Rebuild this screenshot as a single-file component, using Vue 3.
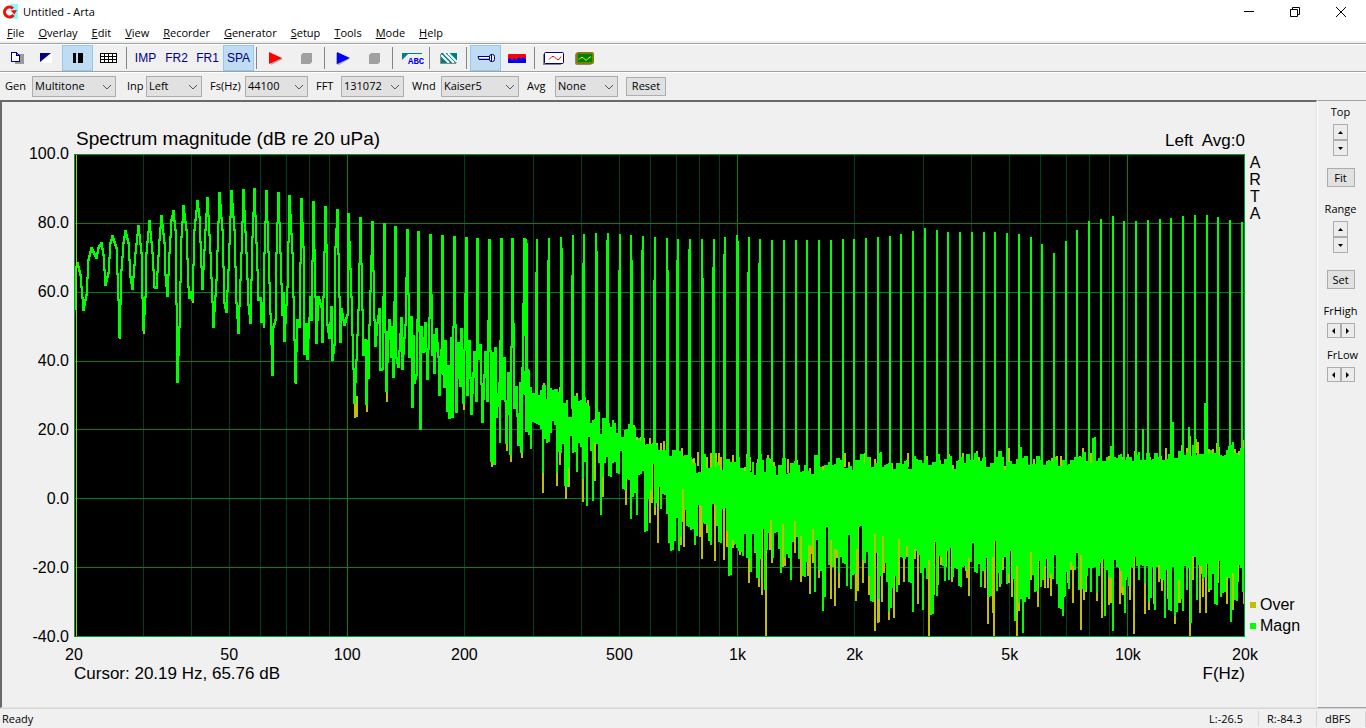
<script setup>
const menus = ['File', 'Overlay', 'Edit', 'View', 'Recorder', 'Generator', 'Setup', 'Tools', 'Mode', 'Help']

const fields = [
  { id: 'gen', label: 'Gen', value: 'Multitone' },
  { id: 'inp', label: 'Inp', value: 'Left' },
  { id: 'fs', label: 'Fs(Hz)', value: '44100' },
  { id: 'fft', label: 'FFT', value: '131072' },
  { id: 'wnd', label: 'Wnd', value: 'Kaiser5' },
  { id: 'avg', label: 'Avg', value: 'None' }
]

/* ---- axes ---- */
const W = 1170
const H = 482
const xOf = f => Math.round((W * Math.log10(f / 20)) / 3)
const yOf = db => Math.round(((100 - db) * H) / 140)

const minorX = []
for (const base of [10, 100, 1000, 10000]) {
  for (let n = 2; n <= 9; n++) {
    const f = base * n
    if (f > 20 && f < 20000) minorX.push(xOf(f))
  }
}
const majorX = [100, 1000, 10000].map(xOf)
const dbLevels = [100, 80, 60, 40, 20, 0, -20, -40]
const majorY = dbLevels.slice(1, -1).map(yOf)
const freqTicks = [
  [20, '20'], [50, '50'], [100, '100'], [200, '200'], [500, '500'],
  [1000, '1k'], [2000, '2k'], [5000, '5k'], [10000, '10k'], [20000, '20k']
]
const pctX = f => (xOf(f) / W) * 100 + '%'
const pctY = db => (yOf(db) / H) * 100 + '%'

/* ---- low frequency trace: x,y vertices ---- */
const lowPoints = (
  '1,155 3,113 4,109 7,121 10,156 13,141 15,106 18,94 23,104 25,94 28,89 30,101 32,131 35,119 37,89 39,82 43,94 45,146 46,183 ' +
  '48,116 50,89 52,77 55,89 57,123 59,135 62,99 65,72 68,99 69,144 70,176 72,143 73,99 76,67 79,99 81,133 83,134 86,86 88,62 91,89 92,121 94,142 ' +
  '96,99 98,66 100,57 102,76 103,150 104,228 106,173 108,83 110,52 113,76 115,133 116,144 118,138 119,146 121,76 124,47 126,63 128,113 129,135 ' +
  '132,76 134,44 137,99 140,173 143,126 146,39 149,76 151,149 153,158 155,116 158,37 161,76 163,149 165,179 168,99 170,36 173,99 175,151 177,169 ' +
  '179,83 181,35 184,116 185,146 187,144 188,168 190,149 190,173 191,99 193,37 196,129 199,221 200,173 202,166 203,99 205,39 207,99 209,161 210,139 211,187 ' +
  '214,133 216,42 219,99 220,143 222,228 224,166 226,173 228,45 230,93 231,200 233,170 234,205 237,143 238,166 240,48 242,143 243,189 245,143 248,153 249,188 ' +
  '250,143 252,53 253,91 254,171 256,184 258,153 259,206 261,191 262,93 264,56 266,143 267,188 268,155 271,171 274,161 275,60 278,143 279,181 281,249 283,206 285,156 287,64 ' +
  '289,156 290,201 292,186 293,250 295,187 295,224 296,171 299,68 301,166 302,192 304,169 306,155 307,216 309,215 311,70 312,178 313,237 315,178 316,166 ' +
  '318,203 319,173 320,223 322,73 323,204 325,213 328,164 329,215 331,184 332,171 334,76 336,203 338,163 339,253 340,182 341,229 343,221 344,166 345,78 347,275 ' +
  '348,173 350,198 352,169 354,225 356,164 357,81 359,201 360,181 361,219 363,175 365,203 366,241 368,196 369,82 370,220 371,233 372,187 374,257 375,212 376,264 378,184 379,263 ' +
  '381,83 383,258 385,189 387,232 388,175 390,249 391,196 393,84 394,241 396,187 398,260 401,198 403,247 404,85 405,205 407,191 409,268 412,198 414,247 416,86 ' +
  '418,307 420,199 421,310 422,194 423,263 426,229 426,288 428,85 429,245 431,204 433,289 435,219 437,300 439,85 441,254 443,233 445,291 447,229 448,298 449,214 451,85 453,277 454,216 456,280'
).split(' ').map(p => p.split(',').map(Number))

/* upper and lower extent of the trace in every plot column */
const columns = new Map()
const extend = (x, y0, y1) => {
  const c = columns.get(x)
  if (c) {
    c[0] = Math.min(c[0], y0)
    c[1] = Math.max(c[1], y1)
  } else columns.set(x, [y0, y1])
}
for (let i = 1; i < lowPoints.length; i++) {
  const [xa, ya] = lowPoints[i - 1]
  const [xb, yb] = lowPoints[i]
  const n = Math.max(1, xb - xa)
  for (let s = 0; s < n; s++) {
    const a = Math.round(ya + ((yb - ya) * s) / n)
    const b = Math.round(ya + ((yb - ya) * (s + 1)) / n)
    extend(xa + s, Math.min(a, b), Math.max(a, b))
  }
}
const lowTrace = [...columns].map(([x, [a, b]]) => `M${x} ${a - 1}V${b + 1}`).join('')

const lowOver = [[46, 184], [70, 179], [104, 228], [119, 148], [222, 229], [281, 263], [283, 262], [293, 257], [313, 247], [376, 264], [390, 255], [418, 312], [433, 296], [437, 307], [448, 303]]

/* ---- dense region: level samples given in thirds of a plot unit ---- */
const decode = (text, ox, oy) =>
  text.trim().split(/\s+/).map(p => {
    const [x, y] = p.split(',').map(Number)
    return [x / 3 + ox, y / 3 + oy]
  })

const bandA = [446, 66]
const bandB = [676, 266]
const bandC = [926, 226]

const tops = [
  ...decode('0,490 8,445 20,450 35,500 42,520 55,515 60,500 72,490 80,530 92,500 105,508 122,515 130,540 142,530 150,585 157,530 170,525 178,540 192,530 205,550 212,600 225,590 237,570 245,640 250,590 265,610 275,620 280,600 290,630 297,640 305,645 313,625 330,610 342,620 350,660 362,655 380,665 400,665 410,672 420,690 432,690 440,695 450,700 465,685 480,690 495,705 510,710 520,720 540,750 550,700 565,740 580,740 595,725 610,740 620,710 640,722 655,710 670,745 680,705 688,752 692,760', ...bandA),
  ...decode('3,150 8,120 15,160 24,125 33,98 37,120 45,155 54,115 62,120 72,130 82,160 90,130 103,112 115,160 125,130 136,122 148,125 156,147 164,130 178,150 187,158 197,105 206,135 216,140 228,125 240,120 252,130 266,110 275,120 286,145 300,130 308,140 320,113 336,100 345,130 355,112 364,140 375,120 390,90 398,135 408,130 418,125 432,147 442,130 458,122 470,115 480,140 490,105 502,115 510,120 520,130 528,110 540,125 552,120 562,100 575,130 585,118 598,108 612,137 625,115 636,105 645,125 655,100 668,120 680,98 690,115 700,105 714,136 728,125 740,110 750,93 758,110 768,140', ...bandB),
  ...decode('20,240 30,237 38,245 52,235 62,198 70,235 78,228 84,255 92,230 102,243 115,222 122,235 134,252 145,240 158,243 170,232 180,250 190,235 205,248 215,237 228,230 240,232 254,208 265,235 275,243 282,168 288,240 298,232 315,243 325,230 334,190 340,225 350,228 360,218 372,238 388,232 400,243 408,215 417,207 424,235 429,140 435,235 445,215 455,238 470,218 480,230 495,230 508,215 516,222 521,123 528,230 540,212 550,225 561,207 567,132 573,220 580,190 590,220 600,218 608,218 613,68 618,218 640,210 650,205 662,218 672,222 680,208 692,195 700,187 708,220 718,215 725,195 731,195', ...bandC)
]

const floors = [
  ...decode('0,670 5,700 12,525 20,630 27,600 35,700 42,615 55,620 62,630 69,765 75,660 82,670 92,640 100,615 110,770 118,705 128,680 138,805 146,750 152,650 162,700 168,755 178,680 188,790 195,735 200,863 205,660 212,700 218,845 228,675 234,730 240,887 250,770 256,740 263,710 270,780 280,735 293,765 302,700 315,810 325,780 335,908 342,830 350,893 360,770 368,760 378,940 385,840 392,810 400,735 408,860 415,800 425,880 432,830 440,890 447,975 455,995 463,965 470,895 475,995 480,950 487,820 495,870 505,930 515,935 523,980 532,950 540,860 548,910 560,915 573,975 582,865 590,925 603,975 612,870 622,935 630,1068 637,960 648,985 658,1005 668,1013 675,950 685,1020', ...bandA),
  ...decode('0,350 5,462 10,345 16,395 24,477 30,430 38,327 44,522 50,400 60,345 65,310 70,420 78,343 86,390 93,459 98,315 106,415 116,413 123,492 130,375 137,310 142,360 147,422 154,350 162,473 172,425 181,378 188,340 195,516 203,372 210,460 216,582 222,537 229,325 237,442 243,362 249,440 260,390 267,470 274,410 282,440 290,503 297,355 303,513 310,468 320,390 331,320 338,420 344,442 350,395 358,480 366,553 376,350 382,405 386,540 394,475 401,350 406,430 413,490 420,576 428,503 433,480 440,524 446,362 454,420 462,420 470,385 480,490 488,578 496,386 504,405 510,470 516,579 524,450 532,486 538,425 546,588 552,370 560,527 569,410 577,450 585,483 590,405 597,489 603,390 610,480 618,450 630,503 640,440 650,450 658,425 669,380 678,465 686,440 693,507 702,455 708,572 713,418 720,530 728,410 733,375 738,513 745,470 752,500 760,420 770,498 776,465', ...bandB),
  ...decode('30,585 34,520 40,600 45,722 52,560 60,668 68,759 75,677 82,660 93,525 100,590 108,640 114,545 120,620 128,603 135,558 142,548 150,595 157,605 163,530 170,620 180,690 188,713 193,650 198,575 206,630 214,545 222,570 228,530 234,638 241,532 248,635 254,640 262,590 268,570 275,640 282,565 290,640 297,600 307,548 315,717 322,575 330,600 338,755 346,545 354,565 361,575 366,620 372,711 380,590 388,630 395,570 404,540 412,563 418,602 427,560 435,610 442,560 450,665 456,560 462,702 470,570 476,560 487,605 497,716 503,575 510,692 517,565 528,707 535,600 542,668 549,702 556,565 561,638 567,570 573,731 580,535 591,660 600,558 606,610 614,590 622,565 630,635 640,590 648,678 655,550 663,655 672,640 680,590 686,605 693,725 700,590 708,668 715,565 722,570 728,640 734,660', ...bandC)
]

const overLow = [
  ...decode('69,818 111,797 120,735 138,838 146,800 189,845 224,783 249,830 318,855 389,910 397,850 414,968 487,905 492,980 546,1016 540,950 586,1022 612,1020 620,980 642,975 660,1005 687,1090 705,998', ...bandA),
  ...decode('17,370 36,525 48,648 60,390 66,430 98,440 105,430 136,400 153,486 175,468 180,521 190,430 208,474 243,537 255,557 267,505 318,542 324,512 339,489 357,525 375,632 383,608 387,605 396,546 402,460 432,594 447,495 462,486 470,410 495,418 504,551 537,648 541,500 553,525 565,495 606,486 588,440 657,527 647,452 706,505 714,611 728,580 732,648 750,500', ...bandB),
  ...decode('9,570 36,650 28,610 51,768 87,657 94,600 114,681 135,625 143,624 152,647 192,650 205,610 219,668 243,749 252,660 258,635 306,713 327,675 333,668 360,671 367,640 378,600 390,660 402,762 435,702 462,671 477,605 485,632 503,658 535,668 541,668 570,768 580,600 600,699 609,650 618,699 627,635 655,610 681,671 699,689 714,605 731,671', ...bandC)
]

const overHigh = [
  ...decode('72,488 95,515 120,500 170,520 203,540 265,610 343,615 352,652 372,655 390,655 412,668 422,668 432,662 486,685 500,718 523,715 534,695 562,710 573,700 588,700 596,698 603,710 640,705 680,702 715,718', ...bandA),
  ...decode('0,110 28,120 53,105 73,125 113,118 142,120 180,145 285,100 345,100 360,110 427,130 475,100 570,120 598,102 638,100 680,93 777,85', ...bandB),
  ...decode('27,207 102,238 155,233 183,228 240,228 272,220 368,230 385,222 451,230 497,205 545,195 587,178 593,185 628,208 650,188 656,200 705,208 727,155 730,180', ...bandC)
]

const nearest = (list, x) => {
  let best = list[0]
  for (const p of list) if (Math.abs(p[0] - x) < Math.abs(best[0] - x)) best = p
  return best[1]
}

let denseOver = ''
let denseMagn = ''
for (let x = 447; x < W; x += 2) {
  const n = (x * 7919) % 13
  const top = Math.round(nearest(tops, x)) + (n % 4)
  const bottom = Math.round(nearest(floors, x)) - (n % 5)
  denseMagn += `M${x} ${top}V${bottom}`
  if (x > 560) denseOver += `M${x} ${top - (n === 3 ? 4 : 0)}V${bottom + (n === 5 ? 8 : 0)}`
}
for (const [x, y] of overLow) {
  denseOver += `M${Math.round(x)} ${Math.round(nearest(tops, x)) + 12}V${Math.min(H, Math.round(y))}`
}
for (const [x, y] of overHigh) denseOver += `M${Math.round(x)} ${Math.round(y)}v14`
for (const [x, y] of lowOver) denseOver += `M${x} ${y - 20}V${y + 1}`

/* ---- multitone lines, ten per octave around 1 kHz ---- */
const toneTops = [
  85, 85, 84, 83, 81, 80, 79, 79, 80, 81, 82, 83, 84, 85, 85, 85, 85, 83, 81, 83,
  85, 86, 86, 86, 86, 86, 86, 85, 85, 84, 83, 82, 80, 77, 74, 76, 78, 78, 78, 78,
  78, 79, 80, 83, 90, 99, 87, 76, 67, 65, 62, 67, 67, 66, 65, 64, 62, 61, 61, 63, 66, 68
]
const tones = toneTops
  .map((y, i) => {
    const x = Math.round(663 + (i - 18) * 11.74)
    const base = Math.round(nearest(tops, x)) + 12
    const skirt = i < 21 ? `M${x + (i % 3 === 0 ? 1 : -1)} ${y + 4 + ((i * 29) % 40)}V${base}` : ''
    return `M${x} ${y}V${base}${skirt}`
  })
  .join('')
</script>

<template>
  <div class="window">
    <header class="titlebar">
      <svg class="logo" width="16" height="16" viewBox="0 0 16 16">
        <path d="M8 0h8v15H8z" fill="#8ff" />
        <circle cx="7.500" cy="8" r="4" fill="#fff" />
        <path d="M11 4.500A5 5 0 1 0 11.500 11" fill="none" stroke="#f01010" stroke-width="3" />
        <path d="M8.500 6.500L15 6l-2.500 4.500z" fill="#f01010" />
      </svg>
      <h1>Untitled - Arta</h1>
      <div class="caption-buttons">
        <button aria-label="Minimize"><svg width="12" height="12"><path d="M1 5.500h10" stroke="#000" /></svg></button>
        <button aria-label="Restore"><svg width="12" height="12"><path d="M1.500 3.500h7v7h-7zM3.500 3V1.500h7v7H9" fill="none" stroke="#000" /></svg></button>
        <button aria-label="Close"><svg width="12" height="12"><path d="M1 1l10 10M11 1L1 11" stroke="#000" /></svg></button>
      </div>
    </header>

    <nav class="menubar">
      <button v-for="m in menus" :key="m"><u>{{ m[0] }}</u>{{ m.slice(1) }}</button>
    </nav>

    <div class="toolbar">
      <button aria-label="New">
        <svg width="18" height="16" shape-rendering="crispEdges"><path d="M10 4h7v10H8V8z" fill="#999" /><path d="M4.500 2.500h5l3 3v6h-8zM9.500 2.500v3h3" fill="#fff" stroke="#000080" /></svg>
      </button>
      <button aria-label="Colors">
        <svg width="18" height="16"><path d="M3 13L14 3v10z" fill="#fff" /><path d="M2 3h11L2 12z" fill="#000080" /></svg>
      </button>
      <button class="on" aria-label="Pause">
        <svg width="18" height="16" shape-rendering="crispEdges"><path d="M4 3h3v10H4zM9 3h5v10H9z" /></svg>
      </button>
      <button aria-label="Grid">
        <svg width="18" height="16" shape-rendering="crispEdges"><path d="M.5 3.500h16v9H.5zM.5 6.500h16M.5 9.500h16M4.500 3v10M8.500 3v10M12.500 3v10" fill="#fff" stroke="#000" /></svg>
      </button>
      <i class="sep"></i>
      <button class="word">IMP</button>
      <button class="word">FR2</button>
      <button class="word">FR1</button>
      <button class="word on">SPA</button>
      <i class="sep"></i>
      <button aria-label="Record">
        <svg width="18" height="16"><path d="M4 4l12 5-12 6z" fill="#aaa" /><path d="M2 2l13 6-13 6z" fill="#f00" /></svg>
      </button>
      <button aria-label="Stop record">
        <svg width="18" height="16"><path d="M5 3h9v9l-2 2H3V5z" fill="#a0a0a0" /></svg>
      </button>
      <i class="sep"></i>
      <button aria-label="Play">
        <svg width="18" height="16"><path d="M1 3v11l3 1 10-6z" fill="#aaa" /><path d="M2 2l13 6-13 6z" fill="#00f" /></svg>
      </button>
      <button aria-label="Stop play">
        <svg width="18" height="16"><path d="M5 3h9v9l-2 2H3V5z" fill="#a0a0a0" /></svg>
      </button>
      <i class="sep"></i>
      <button class="abc" aria-label="Calibrate">
        <svg width="24" height="16"><path d="M2 3h20v1H8L2 10z" fill="#008080" /><text x="8" y="14">ABC</text></svg>
      </button>
      <i class="sep"></i>
      <button aria-label="Signal setup">
        <svg width="18" height="16"><path d="M1 3h16v10H1z" fill="#008080" /><path d="M1 5l8 8M4 3l10 10M8 3l9 9" stroke="#fff" stroke-width="2" /><path d="M.5 4v9.500H16" fill="none" stroke="#888" /></svg>
      </button>
      <i class="sep"></i>
      <button class="on" aria-label="Microphone">
        <svg width="20" height="16"><path d="M2 6.500h12v3H3z" fill="#bbb" stroke="#000080" /><path d="M3 7.500h10" stroke="#fff" /><rect x="13.500" y="4.500" width="5" height="7" rx="2" fill="#eee" stroke="#000080" /><path d="M15.500 4v8" stroke="#000080" /></svg>
      </button>
      <button aria-label="Spectrum">
        <svg width="20" height="16"><rect x="1" y="4" width="18" height="9" rx="1" fill="#f00" /><path d="M1 9l2-1 2 2 2-2 2 2 3-3 2 2 2-2 3 2v4H1z" fill="#00f" /></svg>
      </button>
      <i class="sep"></i>
      <button aria-label="Time record">
        <svg width="22" height="16"><path d="M0 14V4h2v9h16v2H0z" fill="#888" /><rect x="1.500" y="2.500" width="19" height="11" rx="1" fill="#fff" stroke="#000080" /><path d="M6 9.500l3-3h2l3 3h2l2-3" fill="none" stroke="#f00" /></svg>
      </button>
      <button aria-label="Oscilloscope">
        <svg width="22" height="16"><rect x="1" y="3" width="17" height="12" rx="2" fill="#888" /><rect x="3" y="3" width="16" height="10" rx="1" fill="#008000" stroke="#808000" stroke-width="2" /><path d="M5 9.500l2-2h2l3 3 2-2 3-2" fill="none" stroke="#ff0" /></svg>
      </button>
    </div>

    <form class="settings" @submit.prevent>
      <template v-for="f in fields" :key="f.id">
        <label :for="f.id" :class="'label-' + f.id">{{ f.label }}</label>
        <span class="combo" :class="'combo-' + f.id">
          <select :id="f.id"><option>{{ f.value }}</option></select>
          <svg width="10" height="6"><path d="M1 1l4 4 4-4" fill="none" stroke="#555" /></svg>
        </span>
      </template>
      <button class="push">Reset</button>
    </form>

    <div class="body">
      <main class="chart">
        <div class="chart-head">
          <h2>Spectrum magnitude (dB re 20 uPa)</h2>
          <span class="channel">Left&nbsp; Avg:0</span>
        </div>
        <div class="y-axis">
          <span v-for="v in dbLevels" :key="v" :style="{ top: pctY(v) }">{{ v.toFixed(1) }}</span>
        </div>
        <svg class="plot" viewBox="0 0 1171 483" preserveAspectRatio="none" shape-rendering="crispEdges">
          <rect width="1171" height="483" />
          <g class="minor"><path v-for="x in minorX" :key="x" :d="`M${x + 0.5} 0V483`" /></g>
          <g class="major">
            <path v-for="y in majorY" :key="y" :d="`M0 ${y + 0.5}H1171`" />
            <path v-for="x in majorX" :key="x" :d="`M${x + 0.5} 0V483`" />
          </g>
          <path class="over" :d="denseOver" />
          <path class="magn" :d="lowTrace" />
          <path class="magn" :d="denseMagn" />
          <path class="magn" :d="tones" />
          <path class="frame" d="M.5.5h1170v482H.5z" />
          <path class="cursor" d="M2.500 1V482" />
        </svg>
        <div class="right-legend">
          <div class="brand"><span>A</span><span>R</span><span>T</span><span>A</span></div>
          <ul>
            <li><i class="swatch-over"></i>Over</li>
            <li><i class="swatch-magn"></i>Magn</li>
          </ul>
        </div>
        <div class="x-axis">
          <span v-for="t in freqTicks" :key="t[1]" :style="{ left: pctX(t[0]) }">{{ t[1] }}</span>
        </div>
        <div class="chart-foot"><span>Cursor: 20.19 Hz, 65.76 dB</span><span>F(Hz)</span></div>
      </main>

      <aside class="side">
        <span>Top</span>
        <div class="spin-v">
          <button aria-label="Top up"><svg width="5" height="3"><path d="M0 3h5L2.500 0z" /></svg></button>
          <button aria-label="Top down"><svg width="5" height="3"><path d="M0 0h5L2.500 3z" /></svg></button>
        </div>
        <button class="push">Fit</button>
        <span>Range</span>
        <div class="spin-v range">
          <button aria-label="Range up"><svg width="5" height="3"><path d="M0 3h5L2.500 0z" /></svg></button>
          <button aria-label="Range down"><svg width="5" height="3"><path d="M0 0h5L2.500 3z" /></svg></button>
        </div>
        <button class="push">Set</button>
        <span>FrHigh</span>
        <div class="spin-h">
          <button aria-label="FrHigh left"><svg width="3" height="6"><path d="M3 0v6L0 3z" /></svg></button>
          <button aria-label="FrHigh right"><svg width="3" height="6"><path d="M0 0v6l3-3z" /></svg></button>
        </div>
        <span class="frlow">FrLow</span>
        <div class="spin-h">
          <button aria-label="FrLow left"><svg width="3" height="6"><path d="M3 0v6L0 3z" /></svg></button>
          <button aria-label="FrLow right"><svg width="3" height="6"><path d="M0 0v6l3-3z" /></svg></button>
        </div>
      </aside>
    </div>

    <footer class="status">
      <span class="ready">Ready</span>
      <span>L:-26.5</span>
      <span>R:-84.3</span>
      <span>dBFS</span>
    </footer>
  </div>
</template>

<style>
body {
  background: #f0f0f0;
}
</style>

<style scoped>
* {
  box-sizing: border-box;
}
.window {
  display: flex;
  flex-direction: column;
  min-height: 100vh;
  background: #f0f0f0;
  color: #000;
  font: 11px/16px "Open Sans", "Noto Sans", sans-serif;
}
button {
  margin: 0;
  padding: 0;
  border: 0;
  background: none;
  color: inherit;
  font: inherit;
}
svg {
  display: block;
}
.titlebar {
  display: flex;
  align-items: center;
  height: 23px;
  padding-left: 2px;
  background: #fff;
}
.titlebar h1 {
  margin: 0 0 0 5px;
  font-size: 11px;
  font-weight: 400;
}
.caption-buttons {
  display: flex;
  margin-left: auto;
}
.caption-buttons button {
  display: grid;
  place-items: center;
  width: 46px;
  height: 20px;
}
.caption-buttons button:last-child {
  margin-right: 2px;
}
.menubar {
  display: flex;
  height: 18px;
  background: #fff;
}
.menubar button {
  padding: 2px 7px 0;
  height: 18px;
}
.toolbar,
.settings {
  display: flex;
  align-items: center;
  border-top: 1px solid #a0a0a0;
  box-shadow: inset 0 1px #fff;
  height: 28px;
}
.toolbar {
  margin-top: 2px;
}
.toolbar button {
  display: grid;
  place-items: center;
  width: 31px;
  height: 26px;
}
.toolbar button.on {
  background: #c0dcf3;
  border: 1px solid #90c8f6;
}
.toolbar .word {
  color: #000080;
  font: 12px/16px "Liberation Sans", sans-serif;
}
.sep {
  width: 2px;
  height: 22px;
  margin: 0 2px;
  background: #848484;
  border-right: 1px solid #f0f0f0;
}
.abc text {
  fill: #00f;
  font: bold 9px "Liberation Mono", monospace;
}
.settings {
  gap: 8px;
  height: 29px;
  padding-left: 5px;
}
.settings label {
  flex: none;
  margin-right: -8px;
}
.label-gen { width: 27px; }
.label-inp { width: 22px; padding-left: 3px; }
.label-fs { width: 35px; }
.label-fft { width: 25px; }
.label-wnd { width: 29px; }
.label-avg { width: 28px; }
.combo {
  position: relative;
  height: 21px;
}
.combo-gen { width: 84px; }
.combo-inp { width: 56px; }
.combo-fs { width: 63px; }
.combo-fft { width: 63px; }
.combo-wnd { width: 78px; }
.combo-avg { width: 63px; }
.combo select {
  appearance: none;
  width: 100%;
  height: 21px;
  padding: 0 2px;
  border: 1px solid #adadad;
  border-radius: 0;
  background: #e1e1e1;
  color: #000;
  font: inherit;
}
.combo svg {
  position: absolute;
  right: 4px;
  top: 8px;
  pointer-events: none;
}
.push {
  height: 19px;
  border: 1px solid #adadad;
  background: #e1e1e1;
}
.settings .push {
  width: 40px;
}
.body {
  display: flex;
  flex: 1;
}
.chart {
  flex: 1;
  display: grid;
  grid-template-columns: 72px 1fr 71px;
  grid-template-rows: 52px 1fr 26px 44px;
  border: 1px solid #e3e3e3;
  border-top: 2px solid #696969;
  border-left: 2px solid #696969;
  font: 16px/18px "Liberation Sans", Arial, sans-serif;
}
.chart-head {
  grid-area: 1 / 2;
  display: flex;
  justify-content: space-between;
  align-items: flex-end;
  padding: 0 0 4px 2px;
}
.chart-head h2 {
  margin: 0;
  font-size: 19px;
  line-height: 22px;
  font-weight: 400;
}
.channel,
.chart-foot {
  font-size: 17px;
}
.y-axis {
  grid-area: 2 / 1;
  position: relative;
}
.y-axis span {
  position: absolute;
  right: 5px;
  margin-top: -9px;
}
.plot {
  grid-area: 2 / 2;
  width: 100%;
  height: 100%;
}
.plot path {
  fill: none;
  stroke-width: 1;
}
.minor path { stroke: #004018; }
.major path { stroke: #008020; }
.plot .over { stroke: #c0c000; stroke-width: 2; }
.plot .magn { stroke: #0f0; stroke-width: 2; }
.plot .frame { stroke: #009933; }
.plot .cursor { stroke: #c0c000; }
.right-legend {
  grid-area: 2 / 3;
  display: flex;
  flex-direction: column;
  justify-content: space-between;
}
.brand {
  display: flex;
  flex-direction: column;
  align-items: center;
  width: 20px;
  line-height: 17px;
}
.right-legend ul {
  margin: 0;
  padding: 0 0 1px 5px;
  list-style: none;
  line-height: 21px;
}
.right-legend li {
  display: flex;
  align-items: center;
  gap: 4px;
}
.right-legend i {
  width: 6px;
  height: 6px;
}
.swatch-over { background: #c0c000; }
.swatch-magn { background: #0f0; }
.x-axis {
  grid-area: 3 / 2;
  position: relative;
}
.x-axis span {
  position: absolute;
  top: 9px;
  transform: translateX(-50%);
}
.chart-foot {
  grid-area: 4 / 2;
  display: flex;
  justify-content: space-between;
  padding-top: 2px;
}
.side {
  display: flex;
  flex-direction: column;
  align-items: center;
  width: 49px;
  padding: 3px 3px 0 0;
  border-top: 1px solid #a0a0a0;
  border-bottom: 1px solid #a0a0a0;
  border-left: 1px solid #fff;
}
.side .push {
  width: 28px;
  margin-bottom: 14px;
}
.spin-v,
.spin-h {
  display: flex;
  margin: 4px 0 12px;
}
.spin-v {
  flex-direction: column;
}
.spin-v.range {
  margin-bottom: 17px;
}
.spin-v button,
.spin-h button {
  display: grid;
  place-items: center;
  width: 15px;
  height: 16px;
  border: 1px solid #adadad;
  background: #ececec;
}
.spin-h {
  margin-bottom: 9px;
}
.spin-h button {
  width: 14px;
  height: 15px;
}
.frlow {
  padding-left: 4px;
}
.status {
  display: flex;
  align-items: center;
  height: 21px;
  border-top: 1px solid #d7d7d7;
}
.status span {
  width: 58px;
  padding-left: 8px;
  border-right: 1px solid #d7d7d7;
}
.status span:last-child {
  width: 49px;
}
.status .ready {
  flex: 1;
  padding-left: 2px;
  border: 0;
}
</style>
